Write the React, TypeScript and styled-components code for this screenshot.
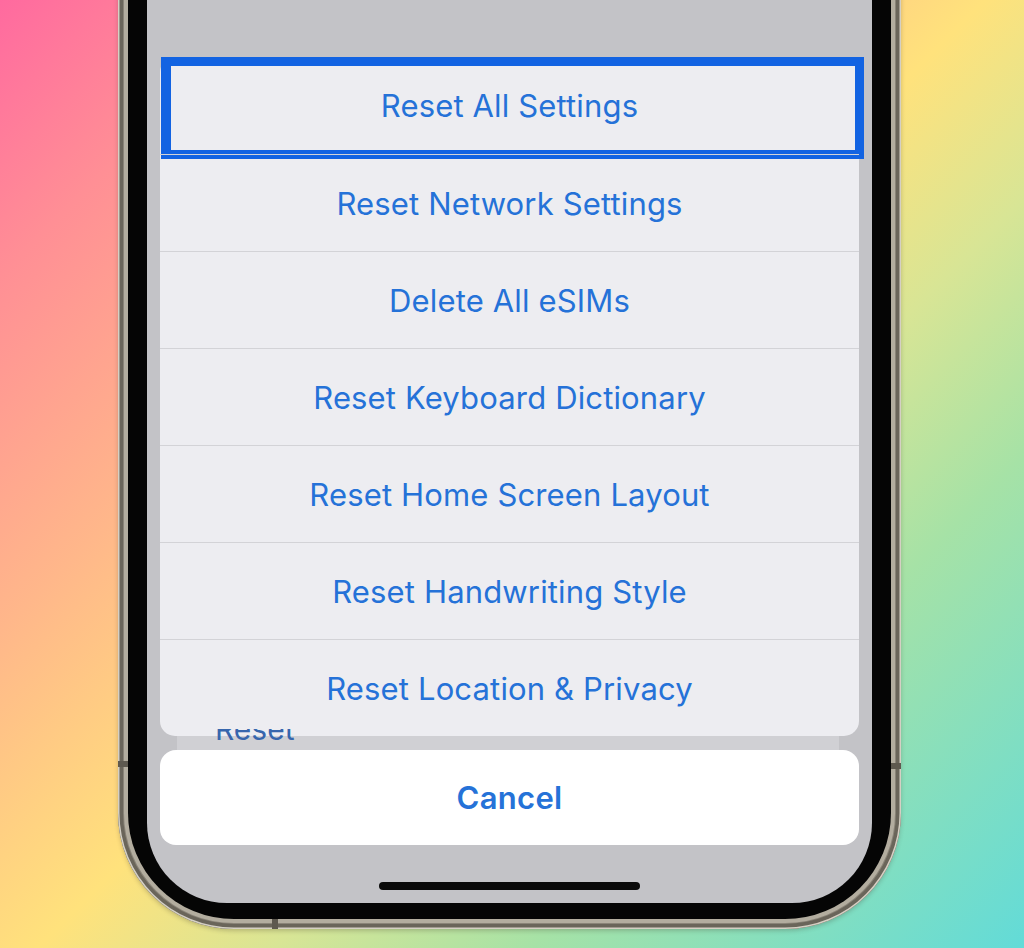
import React from "react";
import styled, { createGlobalStyle } from "styled-components";

const GlobalStyle = createGlobalStyle`
  html, body {
    margin: 0;
    padding: 0;
  }
  body {
    font-family: "Inter", "Liberation Sans", sans-serif;
    -webkit-font-smoothing: antialiased;
  }
`;

const Stage = styled.div`
  width: 1024px;
  height: 948px;
  overflow: hidden;
  display: flex;
  align-items: flex-end;
  justify-content: flex-start;
  padding: 0 0 19px 118px;
  box-sizing: border-box;
  background: linear-gradient(
    135deg,
    #ff6a9f 0%,
    #ff8f95 14%,
    #ffb78a 32%,
    #ffe27c 50%,
    #d8e595 62%,
    #a6e2a6 75%,
    #62dbd8 100%
  );
`;

const Phone = styled.div`
  position: relative;
  flex: none;
  width: 783px;
  height: 1040px;
  box-sizing: border-box;
  padding: 10px;
  border-radius: 0 0 116px 116px;
  background: #b3ad9f;
  box-shadow: inset 0 0 0 1.5px #d5d0c4, inset 0 0 0 5px #6a655a,
    inset 0 0 0 6px #8a8478, 0 2px 4px rgba(60, 50, 40, 0.25);
  display: flex;
`;

const Band = styled.span<{ $side: "left" | "right" | "bottom" }>`
  position: absolute;
  background: #5e594f;
  ${({ $side }) =>
    $side === "left"
      ? "left: 0; bottom: 162px; width: 10px; height: 6px;"
      : $side === "right"
      ? "right: 0; bottom: 160px; width: 10px; height: 6px;"
      : "left: 154px; bottom: 0; width: 6px; height: 10px;"}
`;

const Bezel = styled.div`
  flex: 1;
  display: flex;
  box-sizing: border-box;
  padding: 0 19px 16px 19px;
  background: #050505;
  border-radius: 0 0 106px 106px;
`;

const Screen = styled.div`
  flex: 1;
  display: flex;
  flex-direction: column;
  justify-content: flex-end;
  background: #c3c3c7;
  border-radius: 0 0 80px 80px;
  overflow: hidden;
`;

const SheetArea = styled.div`
  display: flex;
  flex-direction: column;
  padding: 0 13px;
`;

const Card = styled.div`
  position: relative;
  display: flex;
  flex-direction: column;
  background: #ededf1;
  border-radius: 15px;
`;

const Row = styled.div<{ $first?: boolean }>`
  position: relative;
  height: 97px;
  box-sizing: border-box;
  display: flex;
  align-items: center;
  justify-content: center;
  border-top: ${({ $first }) => ($first ? "none" : "1px solid #d3d3d7")};
  color: #2572d8;
  font-size: 31px;
  font-weight: 400;
  letter-spacing: 0.15px;
`;

const Highlight = styled.div`
  position: absolute;
  top: 0;
  left: 1px;
  right: -5px;
  height: 102px;
  box-sizing: border-box;
  border-style: solid;
  border-color: #1263e2;
  border-width: 9px 9px 9px 10px;
  pointer-events: none;
`;

const Gap = styled.div`
  position: relative;
  z-index: 1;
  height: 21px;
  margin-top: -7px;
  display: flex;
  padding: 0 20px 0 17px;
`;

const BehindGroup = styled.div`
  flex: 1;
  overflow: hidden;
  display: flex;
  align-items: flex-end;
  padding-left: 38px;
  background: linear-gradient(to bottom, transparent 7px, #d0d0d4 7px);
`;

const BehindText = styled.span`
  font-size: 30px;
  line-height: 30px;
  color: #3766ad;
  margin-bottom: 6px;
`;

const CancelButton = styled.div`
  height: 95px;
  display: flex;
  align-items: center;
  justify-content: center;
  background: #ffffff;
  border-radius: 16px;
  color: #2572d8;
  font-size: 31px;
  font-weight: 600;
  letter-spacing: 0.3px;
`;

const HomeArea = styled.div`
  height: 58px;
  box-sizing: border-box;
  padding-top: 37px;
  display: flex;
  justify-content: center;
`;

const HomeIndicator = styled.div`
  width: 261px;
  height: 8px;
  border-radius: 4px;
  background: #0a0a0a;
`;

const items = [
  "Reset All Settings",
  "Reset Network Settings",
  "Delete All eSIMs",
  "Reset Keyboard Dictionary",
  "Reset Home Screen Layout",
  "Reset Handwriting Style",
  "Reset Location & Privacy",
];

export default function App() {
  return (
    <>
      <GlobalStyle />
      <Stage>
        <Phone>
          <Band $side="left" />
          <Band $side="right" />
          <Band $side="bottom" />
          <Bezel>
            <Screen>
              <SheetArea>
                <Card>
                  {items.map((label, i) => (
                    <Row key={label} $first={i === 0}>
                      {label}
                      {i === 0 && <Highlight />}
                    </Row>
                  ))}
                </Card>
                <Gap>
                  <BehindGroup>
                    <BehindText>Reset</BehindText>
                  </BehindGroup>
                </Gap>
                <CancelButton>Cancel</CancelButton>
              </SheetArea>
              <HomeArea>
                <HomeIndicator />
              </HomeArea>
            </Screen>
          </Bezel>
        </Phone>
      </Stage>
    </>
  );
}
